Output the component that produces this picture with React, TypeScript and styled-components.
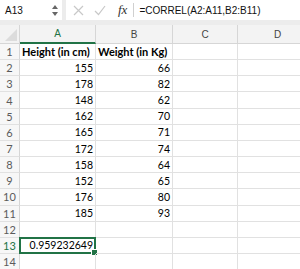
import React from 'react';
import styled, { createGlobalStyle, css } from 'styled-components';

const GlobalStyle = createGlobalStyle`
  html, body {
    margin: 0;
    padding: 0;
    background: #ffffff;
    overflow: hidden;
  }
`;

const colors = {
  green: '#217346',
  header: '#f3f3f3',
  headerLine: '#d6d6d6',
  grid: '#e1e1e1',
  band: '#ececec',
  text: '#000000',
  muted: '#5b5b5b',
};

const Sheet = styled.div`
  width: 300px;
  height: 269px;
  overflow: hidden;
  background: ${colors.band};
  font-family: Lato, 'Open Sans', sans-serif;
`;

const FormulaBar = styled.div`
  display: flex;
  gap: 4px;
  height: 20px;
  padding-bottom: 5px;
  background: ${colors.band};
`;

const NameBox = styled.div`
  display: flex;
  align-items: center;
  justify-content: space-between;
  width: 62px;
  padding: 0 4px 0 5px;
  box-sizing: border-box;
  background: #fff;
  font-family: 'Liberation Sans', Arial, sans-serif;
  font-size: 10px;
  color: #111;
`;

const Spinner = styled.div`
  display: flex;
  flex-direction: column;
  gap: 3px;
`;

const Arrow = styled.span<{ $up?: boolean }>`
  width: 0;
  height: 0;
  border-left: 3px solid transparent;
  border-right: 3px solid transparent;
  ${(p) =>
    p.$up
      ? css`border-bottom: 4px solid #666;`
      : css`border-top: 4px solid #666;`}
`;

const FormulaArea = styled.div`
  flex: 1;
  display: flex;
  align-items: center;
  background: #fff;
  padding-left: 7px;
`;

const ToolIcon = styled.svg`
  flex: none;
  margin-right: 10px;
`;

const Fx = styled.span`
  font-family: 'Liberation Serif', 'Times New Roman', serif;
  font-style: italic;
  font-size: 13px;
  color: #333;
  margin-left: 2px;
  padding-right: 6px;
  border-right: 1px solid #d0d0d0;
  line-height: 14px;
`;

const FormulaText = styled.span`
  font-family: 'Liberation Sans', Arial, sans-serif;
  font-size: 10px;
  color: #111;
  margin-left: 5px;
  white-space: nowrap;
`;

const Grid = styled.div`
  display: grid;
  grid-template-columns: 20px 76px 77px 65px 80px;
  grid-template-rows: 19px repeat(14, 16.17px);
  background: #fff;
`;

const Corner = styled.div`
  position: relative;
  background: ${colors.header};
  border-right: 1px solid ${colors.headerLine};
  border-bottom: 1px solid ${colors.headerLine};
  box-sizing: border-box;
  &::after {
    content: '';
    position: absolute;
    right: 2px;
    bottom: 2px;
    width: 0;
    height: 0;
    border-left: 12px solid transparent;
    border-bottom: 12px solid #dcdcdc;
  }
`;

const ColHeader = styled.div<{ $active?: boolean }>`
  display: flex;
  align-items: center;
  justify-content: center;
  box-sizing: border-box;
  background: ${colors.header};
  border-right: 1px solid ${colors.headerLine};
  border-bottom: ${(p) => (p.$active ? `2px solid ${colors.green}` : `1px solid ${colors.headerLine}`)};
  font-family: 'Liberation Sans', Arial, sans-serif;
  font-size: 10px;
  color: ${(p) => (p.$active ? colors.green : '#444')};
`;

const RowHeader = styled.div<{ $active?: boolean }>`
  display: flex;
  align-items: center;
  justify-content: center;
  box-sizing: border-box;
  background: #f7f7f7;
  border-right: 1px solid ${colors.headerLine};
  border-bottom: 1px solid ${colors.grid};
  font-size: 11px;
  color: ${(p) => (p.$active ? colors.green : colors.muted)};
`;

const Cell = styled.div<{ $num?: boolean; $bold?: boolean; $selected?: boolean }>`
  position: relative;
  display: flex;
  align-items: center;
  justify-content: ${(p) => (p.$num ? 'flex-end' : 'flex-start')};
  padding: 0 2px;
  box-sizing: border-box;
  border-right: 1px solid ${colors.grid};
  border-bottom: 1px solid ${colors.grid};
  font-size: ${(p) => (p.$bold ? '11px' : '10.5px')};
  font-weight: ${(p) => (p.$bold ? 700 : 400)};
  color: ${colors.text};
  white-space: nowrap;
  ${(p) =>
    p.$selected &&
    css`
      border: 2px solid ${colors.green};
      margin: -1px 0 0 -1px;
      padding-right: 1px;
    `}
`;

const Handle = styled.span`
  position: absolute;
  right: -4px;
  bottom: -4px;
  width: 5px;
  height: 5px;
  background: ${colors.green};
  border: 1px solid #fff;
`;

const data: [number, number][] = [
  [155, 66],
  [178, 82],
  [148, 62],
  [162, 70],
  [165, 71],
  [172, 74],
  [158, 64],
  [152, 65],
  [176, 80],
  [185, 93],
];

const columns = ['A', 'B', 'C', 'D'];

function renderRow(row: number) {
  let a: React.ReactNode = null;
  let b: React.ReactNode = null;
  let aNum = true;
  let bold = false;
  if (row === 1) {
    a = 'Height (in cm)';
    b = 'Weight (in Kg)';
    aNum = false;
    bold = true;
  } else if (row <= 11) {
    a = data[row - 2][0];
    b = data[row - 2][1];
  } else if (row === 13) {
    a = '0.959232649';
  }
  const selected = row === 13;
  return (
    <React.Fragment key={row}>
      <RowHeader $active={selected}>{row}</RowHeader>
      <Cell $num={aNum} $bold={bold} $selected={selected}>
        {a}
        {selected && <Handle />}
      </Cell>
      <Cell $num={aNum} $bold={bold}>{b}</Cell>
      <Cell />
      <Cell />
    </React.Fragment>
  );
}

export default function App() {
  const rows = Array.from({ length: 14 }, (_, i) => i + 1);
  return (
    <Sheet>
      <GlobalStyle />
      <FormulaBar>
        <NameBox>
          A13
          <Spinner>
            <Arrow $up />
            <Arrow />
          </Spinner>
        </NameBox>
        <FormulaArea>
          <ToolIcon width="11" height="11" viewBox="0 0 11 11">
            <path d="M1 1 L10 10 M10 1 L1 10" stroke="#c8c8c8" strokeWidth="1.2" fill="none" />
          </ToolIcon>
          <ToolIcon width="12" height="11" viewBox="0 0 12 11">
            <path d="M1 6 L4.5 9.5 L11 1" stroke="#c8c8c8" strokeWidth="1.2" fill="none" />
          </ToolIcon>
          <Fx>fx</Fx>
          <FormulaText>=CORREL(A2:A11,B2:B11)</FormulaText>
        </FormulaArea>
      </FormulaBar>
      <Grid>
        <Corner />
        {columns.map((c) => (
          <ColHeader key={c} $active={c === 'A'}>
            {c}
          </ColHeader>
        ))}
        {rows.map(renderRow)}
      </Grid>
    </Sheet>
  );
}
